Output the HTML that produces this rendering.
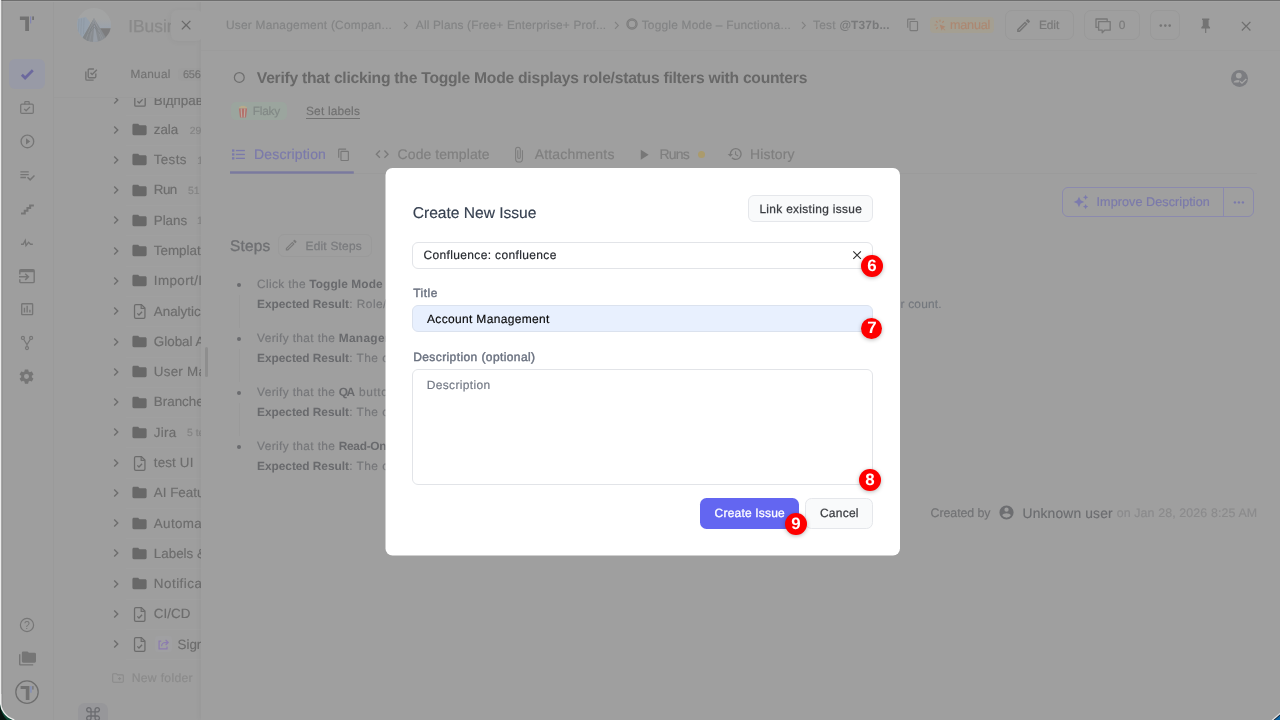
<!DOCTYPE html>
<html lang="en">
<head>
<meta charset="utf-8">
<title>Create New Issue</title>
<style>
*{box-sizing:border-box;margin:0;padding:0}
html,body{width:1280px;height:720px;overflow:hidden;background:#ebebeb;font-family:"Liberation Sans",sans-serif;color:#374151}
#app{position:absolute;left:0;top:0;width:1280px;height:720px;background:#9f9f9f;overflow:hidden}
#side{position:absolute;left:0;top:0;width:54px;height:720px;background:#9e9e9e;border-right:1px solid #9a9a9a}
#tree{position:absolute;left:0;top:0;width:201px;height:720px;overflow:hidden}
#detail{position:absolute;left:0;top:0;width:1280px;height:720px}
#modal{position:absolute;left:0;top:0;width:1280px;height:720px}
svg{position:absolute;overflow:visible}
.t{position:absolute;white-space:nowrap;line-height:1;-webkit-text-stroke:.16px;text-rendering:geometricPrecision}
#tree,#side,#detail,#modal{will-change:transform}
.b{position:absolute}
.badge{position:absolute;width:21.8px;height:21.8px;border-radius:50%;background:#fe0000;box-shadow:0 1px 4px rgba(0,0,0,.28)}
.badge span{text-rendering:geometricPrecision;position:absolute;left:0;right:0;text-align:center;color:#fff;font-weight:700;line-height:1}
</style>
</head>
<body>
<div id="app">
<div id="tree">
<div class="b" style="left:54.00px;top:0.00px;width:147.00px;height:720.00px;background:#9e9e9e;"></div>
<svg style="left:108.15px;top:92.45px;" width="16.10" height="16.10" viewBox="0 0 24 24" fill="#6c6c6c"><path d="M8.59,16.58L13.17,12L8.59,7.41L10,6L16,12L10,18L8.59,16.58Z"/></svg>
<svg style="left:134px;top:94.50px" width="12" height="12" viewBox="0 0 12 12" fill="none" stroke="#6c6c6c" stroke-width="1.3"><rect x="0.8" y="0.8" width="10.4" height="10.4" rx="1"/><path d="M3.4 6.2L5.2 8L8.6 4.4"/></svg>
<div class="t" style="left:153.80px;top:94px;font-size:13.4px;color:#6d6d6d;">Відправка</div>
<div class="b" style="left:126.00px;top:115.40px;width:75.00px;height:0.80px;background:#a0a0a0;"></div>
<svg style="left:108.15px;top:121.55px;" width="16.10" height="16.10" viewBox="0 0 24 24" fill="#6c6c6c"><path d="M8.59,16.58L13.17,12L8.59,7.41L10,6L16,12L10,18L8.59,16.58Z"/></svg>
<svg style="left:131.38px;top:121.08px;" width="17.04" height="17.04" viewBox="0 0 24 24" fill="#686868"><path d="M10,4H4C2.89,4 2,4.89 2,6V18A2,2 0 0,0 4,20H20A2,2 0 0,0 22,18V8C22,6.89 21.1,6 20,6H12L10,4Z"/></svg>
<div class="t" style="left:153.80px;top:123px;font-size:13.4px;color:#6d6d6d;letter-spacing:-0.094px;">zala</div>
<div class="t" style="left:189.70px;top:127px;font-size:10.4px;color:#848484;">29</div>
<div class="b" style="left:126.00px;top:144.50px;width:75.00px;height:0.80px;background:#a0a0a0;"></div>
<svg style="left:108.15px;top:151.85px;" width="16.10" height="16.10" viewBox="0 0 24 24" fill="#6c6c6c"><path d="M8.59,16.58L13.17,12L8.59,7.41L10,6L16,12L10,18L8.59,16.58Z"/></svg>
<svg style="left:131.38px;top:151.38px;" width="17.04" height="17.04" viewBox="0 0 24 24" fill="#686868"><path d="M10,4H4C2.89,4 2,4.89 2,6V18A2,2 0 0,0 4,20H20A2,2 0 0,0 22,18V8C22,6.89 21.1,6 20,6H12L10,4Z"/></svg>
<div class="t" style="left:153.80px;top:153px;font-size:13.4px;color:#6d6d6d;letter-spacing:0.331px;">Tests</div>
<div class="t" style="left:197.20px;top:157px;font-size:10.4px;color:#848484;">12</div>
<div class="b" style="left:126.00px;top:174.80px;width:75.00px;height:0.80px;background:#a0a0a0;"></div>
<svg style="left:108.15px;top:182.15px;" width="16.10" height="16.10" viewBox="0 0 24 24" fill="#6c6c6c"><path d="M8.59,16.58L13.17,12L8.59,7.41L10,6L16,12L10,18L8.59,16.58Z"/></svg>
<svg style="left:131.38px;top:181.68px;" width="17.04" height="17.04" viewBox="0 0 24 24" fill="#686868"><path d="M10,4H4C2.89,4 2,4.89 2,6V18A2,2 0 0,0 4,20H20A2,2 0 0,0 22,18V8C22,6.89 21.1,6 20,6H12L10,4Z"/></svg>
<div class="t" style="left:153.80px;top:183px;font-size:13.4px;color:#6d6d6d;letter-spacing:-0.591px;">Run</div>
<div class="t" style="left:188.00px;top:187px;font-size:10.4px;color:#848484;">51 tests</div>
<div class="b" style="left:126.00px;top:205.10px;width:75.00px;height:0.80px;background:#a0a0a0;"></div>
<svg style="left:108.15px;top:212.45px;" width="16.10" height="16.10" viewBox="0 0 24 24" fill="#6c6c6c"><path d="M8.59,16.58L13.17,12L8.59,7.41L10,6L16,12L10,18L8.59,16.58Z"/></svg>
<svg style="left:131.38px;top:211.98px;" width="17.04" height="17.04" viewBox="0 0 24 24" fill="#686868"><path d="M10,4H4C2.89,4 2,4.89 2,6V18A2,2 0 0,0 4,20H20A2,2 0 0,0 22,18V8C22,6.89 21.1,6 20,6H12L10,4Z"/></svg>
<div class="t" style="left:153.80px;top:214px;font-size:13.4px;color:#6d6d6d;letter-spacing:-0.055px;">Plans</div>
<div class="t" style="left:197.00px;top:217px;font-size:10.4px;color:#848484;">1 test</div>
<div class="b" style="left:126.00px;top:235.40px;width:75.00px;height:0.80px;background:#a0a0a0;"></div>
<svg style="left:108.15px;top:242.65px;" width="16.10" height="16.10" viewBox="0 0 24 24" fill="#6c6c6c"><path d="M8.59,16.58L13.17,12L8.59,7.41L10,6L16,12L10,18L8.59,16.58Z"/></svg>
<svg style="left:131.38px;top:242.18px;" width="17.04" height="17.04" viewBox="0 0 24 24" fill="#686868"><path d="M10,4H4C2.89,4 2,4.89 2,6V18A2,2 0 0,0 4,20H20A2,2 0 0,0 22,18V8C22,6.89 21.1,6 20,6H12L10,4Z"/></svg>
<div class="t" style="left:153.80px;top:244px;font-size:13.4px;color:#6d6d6d;">Templates</div>
<div class="b" style="left:126.00px;top:265.60px;width:75.00px;height:0.80px;background:#a0a0a0;"></div>
<svg style="left:108.15px;top:272.95px;" width="16.10" height="16.10" viewBox="0 0 24 24" fill="#6c6c6c"><path d="M8.59,16.58L13.17,12L8.59,7.41L10,6L16,12L10,18L8.59,16.58Z"/></svg>
<svg style="left:131.38px;top:272.48px;" width="17.04" height="17.04" viewBox="0 0 24 24" fill="#686868"><path d="M10,4H4C2.89,4 2,4.89 2,6V18A2,2 0 0,0 4,20H20A2,2 0 0,0 22,18V8C22,6.89 21.1,6 20,6H12L10,4Z"/></svg>
<div class="t" style="left:153.80px;top:274px;font-size:13.4px;color:#6d6d6d;letter-spacing:0.400px;">Import/Import</div>
<div class="b" style="left:126.00px;top:295.90px;width:75.00px;height:0.80px;background:#a0a0a0;"></div>
<svg style="left:108.15px;top:303.25px;" width="16.10" height="16.10" viewBox="0 0 24 24" fill="#6c6c6c"><path d="M8.59,16.58L13.17,12L8.59,7.41L10,6L16,12L10,18L8.59,16.58Z"/></svg>
<svg style="left:132.08px;top:303.39px" width="15.48" height="16.83" viewBox="0 0 18.4 20"><path d="M4.6 1.8H11.2L15.4 6V16.6Q15.4 18.2 13.8 18.2H4.6Q3 18.2 3 16.6V3.4Q3 1.8 4.6 1.8Z" fill="none" stroke="#6c6c6c" stroke-width="1.5"/><path d="M10.9 2V6.3H15.2" fill="none" stroke="#6c6c6c" stroke-width="1.4"/><path d="M6.3 12.3L8.3 14.3L12 10.4" fill="none" stroke="#6c6c6c" stroke-width="1.5"/></svg>
<div class="t" style="left:153.80px;top:305px;font-size:13.4px;color:#6d6d6d;">Analytics</div>
<div class="b" style="left:126.00px;top:326.20px;width:75.00px;height:0.80px;background:#a0a0a0;"></div>
<svg style="left:108.15px;top:333.55px;" width="16.10" height="16.10" viewBox="0 0 24 24" fill="#6c6c6c"><path d="M8.59,16.58L13.17,12L8.59,7.41L10,6L16,12L10,18L8.59,16.58Z"/></svg>
<svg style="left:131.38px;top:333.08px;" width="17.04" height="17.04" viewBox="0 0 24 24" fill="#686868"><path d="M10,4H4C2.89,4 2,4.89 2,6V18A2,2 0 0,0 4,20H20A2,2 0 0,0 22,18V8C22,6.89 21.1,6 20,6H12L10,4Z"/></svg>
<div class="t" style="left:153.80px;top:335px;font-size:13.4px;color:#6d6d6d;">Global Analytics</div>
<div class="b" style="left:126.00px;top:356.50px;width:75.00px;height:0.80px;background:#a0a0a0;"></div>
<svg style="left:108.15px;top:363.85px;" width="16.10" height="16.10" viewBox="0 0 24 24" fill="#6c6c6c"><path d="M8.59,16.58L13.17,12L8.59,7.41L10,6L16,12L10,18L8.59,16.58Z"/></svg>
<svg style="left:131.38px;top:363.38px;" width="17.04" height="17.04" viewBox="0 0 24 24" fill="#686868"><path d="M10,4H4C2.89,4 2,4.89 2,6V18A2,2 0 0,0 4,20H20A2,2 0 0,0 22,18V8C22,6.89 21.1,6 20,6H12L10,4Z"/></svg>
<div class="t" style="left:153.80px;top:365px;font-size:13.4px;color:#6d6d6d;letter-spacing:0.250px;">User Management</div>
<div class="b" style="left:126.00px;top:386.80px;width:75.00px;height:0.80px;background:#a0a0a0;"></div>
<svg style="left:108.15px;top:394.05px;" width="16.10" height="16.10" viewBox="0 0 24 24" fill="#6c6c6c"><path d="M8.59,16.58L13.17,12L8.59,7.41L10,6L16,12L10,18L8.59,16.58Z"/></svg>
<svg style="left:131.38px;top:393.58px;" width="17.04" height="17.04" viewBox="0 0 24 24" fill="#686868"><path d="M10,4H4C2.89,4 2,4.89 2,6V18A2,2 0 0,0 4,20H20A2,2 0 0,0 22,18V8C22,6.89 21.1,6 20,6H12L10,4Z"/></svg>
<div class="t" style="left:153.80px;top:395px;font-size:13.4px;color:#6d6d6d;">Branches</div>
<div class="b" style="left:126.00px;top:417.00px;width:75.00px;height:0.80px;background:#a0a0a0;"></div>
<svg style="left:108.15px;top:424.35px;" width="16.10" height="16.10" viewBox="0 0 24 24" fill="#6c6c6c"><path d="M8.59,16.58L13.17,12L8.59,7.41L10,6L16,12L10,18L8.59,16.58Z"/></svg>
<svg style="left:131.38px;top:423.88px;" width="17.04" height="17.04" viewBox="0 0 24 24" fill="#686868"><path d="M10,4H4C2.89,4 2,4.89 2,6V18A2,2 0 0,0 4,20H20A2,2 0 0,0 22,18V8C22,6.89 21.1,6 20,6H12L10,4Z"/></svg>
<div class="t" style="left:153.80px;top:426px;font-size:13.4px;color:#6d6d6d;letter-spacing:0.236px;">Jira</div>
<div class="t" style="left:187.00px;top:429px;font-size:10.4px;color:#848484;">5 tests</div>
<div class="b" style="left:126.00px;top:447.30px;width:75.00px;height:0.80px;background:#a0a0a0;"></div>
<svg style="left:108.15px;top:454.65px;" width="16.10" height="16.10" viewBox="0 0 24 24" fill="#6c6c6c"><path d="M8.59,16.58L13.17,12L8.59,7.41L10,6L16,12L10,18L8.59,16.58Z"/></svg>
<svg style="left:132.08px;top:454.79px" width="15.48" height="16.83" viewBox="0 0 18.4 20"><path d="M4.6 1.8H11.2L15.4 6V16.6Q15.4 18.2 13.8 18.2H4.6Q3 18.2 3 16.6V3.4Q3 1.8 4.6 1.8Z" fill="none" stroke="#6c6c6c" stroke-width="1.5"/><path d="M10.9 2V6.3H15.2" fill="none" stroke="#6c6c6c" stroke-width="1.4"/><path d="M6.3 12.3L8.3 14.3L12 10.4" fill="none" stroke="#6c6c6c" stroke-width="1.5"/></svg>
<div class="t" style="left:153.80px;top:456px;font-size:13.4px;color:#6d6d6d;letter-spacing:0.146px;">test UI</div>
<div class="b" style="left:126.00px;top:477.60px;width:75.00px;height:0.80px;background:#a0a0a0;"></div>
<svg style="left:108.15px;top:484.95px;" width="16.10" height="16.10" viewBox="0 0 24 24" fill="#6c6c6c"><path d="M8.59,16.58L13.17,12L8.59,7.41L10,6L16,12L10,18L8.59,16.58Z"/></svg>
<svg style="left:131.38px;top:484.48px;" width="17.04" height="17.04" viewBox="0 0 24 24" fill="#686868"><path d="M10,4H4C2.89,4 2,4.89 2,6V18A2,2 0 0,0 4,20H20A2,2 0 0,0 22,18V8C22,6.89 21.1,6 20,6H12L10,4Z"/></svg>
<div class="t" style="left:153.80px;top:486px;font-size:13.4px;color:#6d6d6d;">AI Features</div>
<div class="b" style="left:126.00px;top:507.90px;width:75.00px;height:0.80px;background:#a0a0a0;"></div>
<svg style="left:108.15px;top:515.25px;" width="16.10" height="16.10" viewBox="0 0 24 24" fill="#6c6c6c"><path d="M8.59,16.58L13.17,12L8.59,7.41L10,6L16,12L10,18L8.59,16.58Z"/></svg>
<svg style="left:131.38px;top:514.78px;" width="17.04" height="17.04" viewBox="0 0 24 24" fill="#686868"><path d="M10,4H4C2.89,4 2,4.89 2,6V18A2,2 0 0,0 4,20H20A2,2 0 0,0 22,18V8C22,6.89 21.1,6 20,6H12L10,4Z"/></svg>
<div class="t" style="left:153.80px;top:517px;font-size:13.4px;color:#6d6d6d;letter-spacing:0.350px;">Automation</div>
<div class="b" style="left:126.00px;top:538.20px;width:75.00px;height:0.80px;background:#a0a0a0;"></div>
<svg style="left:108.15px;top:545.45px;" width="16.10" height="16.10" viewBox="0 0 24 24" fill="#6c6c6c"><path d="M8.59,16.58L13.17,12L8.59,7.41L10,6L16,12L10,18L8.59,16.58Z"/></svg>
<svg style="left:131.38px;top:544.98px;" width="17.04" height="17.04" viewBox="0 0 24 24" fill="#686868"><path d="M10,4H4C2.89,4 2,4.89 2,6V18A2,2 0 0,0 4,20H20A2,2 0 0,0 22,18V8C22,6.89 21.1,6 20,6H12L10,4Z"/></svg>
<div class="t" style="left:153.80px;top:547px;font-size:13.4px;color:#6d6d6d;">Labels &amp; Fields</div>
<div class="b" style="left:126.00px;top:568.40px;width:75.00px;height:0.80px;background:#a0a0a0;"></div>
<svg style="left:108.15px;top:575.75px;" width="16.10" height="16.10" viewBox="0 0 24 24" fill="#6c6c6c"><path d="M8.59,16.58L13.17,12L8.59,7.41L10,6L16,12L10,18L8.59,16.58Z"/></svg>
<svg style="left:131.38px;top:575.28px;" width="17.04" height="17.04" viewBox="0 0 24 24" fill="#686868"><path d="M10,4H4C2.89,4 2,4.89 2,6V18A2,2 0 0,0 4,20H20A2,2 0 0,0 22,18V8C22,6.89 21.1,6 20,6H12L10,4Z"/></svg>
<div class="t" style="left:153.80px;top:577px;font-size:13.4px;color:#6d6d6d;letter-spacing:0.500px;">Notifications</div>
<div class="b" style="left:126.00px;top:598.70px;width:75.00px;height:0.80px;background:#a0a0a0;"></div>
<svg style="left:108.15px;top:606.05px;" width="16.10" height="16.10" viewBox="0 0 24 24" fill="#6c6c6c"><path d="M8.59,16.58L13.17,12L8.59,7.41L10,6L16,12L10,18L8.59,16.58Z"/></svg>
<svg style="left:132.08px;top:606.19px" width="15.48" height="16.83" viewBox="0 0 18.4 20"><path d="M4.6 1.8H11.2L15.4 6V16.6Q15.4 18.2 13.8 18.2H4.6Q3 18.2 3 16.6V3.4Q3 1.8 4.6 1.8Z" fill="none" stroke="#6c6c6c" stroke-width="1.5"/><path d="M10.9 2V6.3H15.2" fill="none" stroke="#6c6c6c" stroke-width="1.4"/><path d="M6.3 12.3L8.3 14.3L12 10.4" fill="none" stroke="#6c6c6c" stroke-width="1.5"/></svg>
<div class="t" style="left:153.80px;top:607px;font-size:13.4px;color:#6d6d6d;letter-spacing:0.031px;">CI/CD</div>
<div class="b" style="left:126.00px;top:629.00px;width:75.00px;height:0.80px;background:#a0a0a0;"></div>
<svg style="left:108.15px;top:636.35px;" width="16.10" height="16.10" viewBox="0 0 24 24" fill="#6c6c6c"><path d="M8.59,16.58L13.17,12L8.59,7.41L10,6L16,12L10,18L8.59,16.58Z"/></svg>
<svg style="left:132.08px;top:636.49px" width="15.48" height="16.83" viewBox="0 0 18.4 20"><path d="M4.6 1.8H11.2L15.4 6V16.6Q15.4 18.2 13.8 18.2H4.6Q3 18.2 3 16.6V3.4Q3 1.8 4.6 1.8Z" fill="none" stroke="#6c6c6c" stroke-width="1.5"/><path d="M10.9 2V6.3H15.2" fill="none" stroke="#6c6c6c" stroke-width="1.4"/><path d="M6.3 12.3L8.3 14.3L12 10.4" fill="none" stroke="#6c6c6c" stroke-width="1.5"/></svg>
<div class="b" style="left:155.00px;top:636.40px;width:16.60px;height:16.00px;background:#a0a0a2;border-radius:3.0px;"></div>
<svg style="left:158px;top:638.80px" width="11" height="11" viewBox="0 0 11 11" fill="none" stroke="#8c7cb0" stroke-width="1.25"><path d="M3.2 2H1.1V9.9H9V7.6"/><path d="M3.6 7.2Q3.8 3.6 7.4 3.5H10M7.6 0.9L10.2 3.5L7.6 6.1"/></svg>
<div class="t" style="left:177.50px;top:638px;font-size:13.4px;color:#6d6d6d;">Sign In</div>
<div class="b" style="left:126.00px;top:659.30px;width:75.00px;height:0.80px;background:#a0a0a0;"></div>
<svg style="left:112px;top:672.8px" width="12" height="10" viewBox="0 0 12 10" fill="none" stroke="#8b8b8b" stroke-width="1.1"><path d="M0.7 1.6Q0.7 0.7 1.6 0.7H4.4L5.6 1.9H10.4Q11.3 1.9 11.3 2.8V8.3Q11.3 9.2 10.4 9.2H1.6Q0.7 9.2 0.7 8.3Z"/><path d="M7.6 4V7.2M6 5.6H9.2"/></svg>
<div class="t" style="left:131.70px;top:672px;font-size:12.2px;color:#8b8b8b;letter-spacing:0.298px;">New folder</div>
<div class="b" style="left:54.00px;top:0.00px;width:147.00px;height:97.50px;background:#9e9e9e;border-bottom:1px solid #9b9b9b;"></div>
<svg style="left:77.3px;top:8px" width="34" height="34" viewBox="0 0 34 34"><defs><clipPath id="av"><circle cx="17" cy="17" r="17"/></clipPath><linearGradient id="sky" x1="0" y1="0" x2="0" y2="1"><stop offset="0" stop-color="#a3a4a4"/><stop offset="1" stop-color="#9aa2ac"/></linearGradient></defs><g clip-path="url(#av)"><rect width="34" height="34" fill="#a3a4a4"/><rect x="20" y="11" width="14" height="9.5" fill="url(#sky)"/><path d="M23 20.3H34V31H28Z" fill="#7c7c7d"/><path d="M0 10.8L8.8 9L13.2 14.5L6 34H0Z" fill="#96a1ad"/><path d="M2 11L1 30M4.5 10.5L3.5 32M7 10L6.5 26" stroke="#8d97a1" stroke-width=".7"/><path d="M17 10.3L33 36H2Z" fill="#888c90"/><path d="M17 10.3L2 36H10Z" fill="#828689"/><path d="M17.3 15L21 34H16Z" fill="#979da5"/><path d="M17 10.3L8 34M17 10.3L25 34M17 12L12.5 34M17.2 12L27.5 34" stroke="#979b9f" stroke-width=".6" fill="none"/><path d="M13 22L17.3 16L21.3 22M11.5 26L17.3 19L23 26" stroke="#7d8185" stroke-width=".7" fill="none"/></g></svg>
<div class="t" style="left:128.20px;top:18px;font-size:17.4px;color:#8a8a8a;-webkit-text-stroke:.25px #8a8a8a;">IBusiness</div>
<svg style="left:84.8px;top:67.7px" width="13" height="13" viewBox="0 0 12.5 12.5" fill="none" stroke="#737373" stroke-width="1.3"><path d="M10.4 5.4V8.2Q10.4 9.4 9.2 9.4H4.3Q3.1 9.4 3.1 8.2V2.2Q3.1 1 4.3 1H8.6"/><path d="M5.3 4.6L6.9 6.3L11.4 1.6"/><path d="M0.8 3.4V10.5Q0.8 11.7 2 11.7H8.3"/></svg>
<div class="t" style="left:130.40px;top:69px;font-size:11.8px;color:#737373;letter-spacing:0.260px;">Manual</div>
<div class="b" style="left:178.40px;top:67.80px;width:33.60px;height:13.00px;background:#9c9c9c;border-radius:4.0px;"></div>
<div class="t" style="left:182.90px;top:70px;font-size:11.0px;color:#757575;letter-spacing:-0.227px;">656</div>
<div class="b" style="left:78.10px;top:702.80px;width:29.70px;height:27.20px;background:#97979a;border-radius:6.5px;"></div>
<div class="t" style="left:83.7px;top:706.6px;font-size:18.6px;color:#6c6d71;font-family:'DejaVu Sans',sans-serif;-webkit-text-stroke:0">⌘</div>
</div>
<div id="side">
<svg style="left:0;top:0" width="54" height="50" viewBox="0 0 54 50"><path d="M19.9 16.4H29V31H25.2V19.9H19.9Z" fill="#727272"/><rect x="30.1" y="16.4" width="1.1" height="7" fill="#7f82b4"/><rect x="32.2" y="16.4" width="1.8" height="3.6" fill="#727272"/></svg>
<div class="b" style="left:8.80px;top:58.80px;width:36.30px;height:30.50px;background:#989aa6;border-radius:6.0px;"></div>
<svg style="left:18.97px;top:66.14px;" width="16.33" height="16.33" viewBox="0 0 24 24" fill="#6c699e"><path d="M9,20.42L2.79,14.21L5.62,11.38L9,14.77L18.88,4.88L21.71,7.71L9,20.42Z"/></svg>
<svg style="left:19px;top:100px" width="16" height="16" viewBox="0 0 16 16" fill="none" stroke="#767676" stroke-width="1.25"><rect x="1.7" y="4.2" width="12.6" height="9.2" rx="1.2"/><path d="M5.8 4.2V2.4Q5.8 1.7 6.5 1.7H9.5Q10.2 1.7 10.2 2.4V4.2"/><path d="M5.2 8.9L7.1 10.8L11 6.9" stroke-width="1.3"/></svg>
<svg style="left:18.60px;top:133.10px;" width="16.80" height="16.80" viewBox="0 0 24 24" fill="#767676"><path d="M12,20C7.59,20 4,16.41 4,12C4,7.59 7.59,4 12,4C16.41,4 20,7.59 20,12C20,16.41 16.41,20 12,20M12,2A10,10 0 0,0 2,12A10,10 0 0,0 12,22A10,10 0 0,0 22,12A10,10 0 0,0 12,2M10,16.5L16,12L10,7.5V16.5Z"/></svg>
<svg style="left:18.56px;top:166.56px;" width="16.69" height="16.69" viewBox="0 0 24 24" fill="#767676"><path d="M14,10H2V12H14V10M14,6H2V8H14V6M2,16H10V14H2V16M21.5,11.5L23,13L16,20L11.5,15.5L13,14L16,17L21.5,11.5Z"/></svg>
<svg style="left:19.06px;top:200.56px;" width="16.21" height="16.21" viewBox="0 0 24 24" fill="#767676"><path d="M15,5V9H11V13H7V17H3V20H10V16H14V12H18V8H22V5H15Z"/></svg>
<svg style="left:19.34px;top:234.60px;" width="15.82" height="15.82" viewBox="0 0 24 24" fill="#767676"><path d="M3,13H5.79L10.1,4.79L11.28,13.75L14.5,9.66L17.83,13H21V15H17L14.67,12.67L9.92,18.73L8.94,11.31L7,15H3V13Z"/></svg>
<svg style="left:19px;top:268.7px" width="16" height="14.4" viewBox="0 0 16 14.4" fill="none" stroke="#767676" stroke-width="1.4"><path d="M0.8 5.4V2Q0.8 0.8 2 0.8H14Q15.2 0.8 15.2 2V12.4Q15.2 13.6 14 13.6H2Q0.8 13.6 0.8 12.4V10.2"/><path d="M0.8 2H15.2" stroke-width="2.4"/><path d="M0 7.8H9M6.2 4.7L9.4 7.8L6.2 10.9" stroke-width="1.5"/></svg>
<svg style="left:18.83px;top:301.08px;" width="16.33" height="16.33" viewBox="0 0 24 24" fill="#767676"><path d="M9,17H7V10H9V17M13,17H11V7H13V17M17,17H15V13H17V17M19,19H5V5H19V19.1M19,3H5C3.9,3 3,3.9 3,5V19C3,20.1 3.9,21 5,21H19C20.1,21 21,20.1 21,19V5C21,3.9 20.1,3 19,3Z"/></svg>
<svg style="left:19px;top:335px" width="16" height="16" viewBox="0 0 16 16" fill="none" stroke="#767676" stroke-width="1.2"><circle cx="3.9" cy="2.9" r="1.5"/><circle cx="12.1" cy="2.9" r="1.5"/><circle cx="8" cy="13.1" r="1.5"/><path d="M4.6 4.2L8 9.6L11.4 4.2M8 9.6V11.6"/></svg>
<svg style="left:18.47px;top:368.47px;" width="17.06" height="17.06" viewBox="0 0 24 24" fill="#767676"><path d="M12,15.5A3.5,3.5 0 0,1 8.5,12A3.5,3.5 0 0,1 12,8.5A3.5,3.5 0 0,1 15.5,12A3.5,3.5 0 0,1 12,15.5M19.43,12.97C19.47,12.65 19.5,12.33 19.5,12C19.5,11.67 19.47,11.34 19.43,11L21.54,9.37C21.73,9.22 21.78,8.95 21.66,8.73L19.66,5.27C19.54,5.05 19.27,4.96 19.05,5.05L16.56,6.05C16.04,5.66 15.5,5.32 14.87,5.07L14.5,2.42C14.46,2.18 14.25,2 14,2H10C9.75,2 9.54,2.18 9.5,2.42L9.13,5.07C8.5,5.32 7.96,5.66 7.44,6.05L4.95,5.05C4.73,4.96 4.46,5.05 4.34,5.27L2.34,8.73C2.21,8.95 2.27,9.22 2.46,9.37L4.57,11C4.53,11.34 4.5,11.67 4.5,12C4.5,12.33 4.53,12.65 4.57,12.97L2.46,14.63C2.27,14.78 2.21,15.05 2.34,15.27L4.34,18.73C4.46,18.95 4.73,19.03 4.95,18.95L7.44,17.94C7.96,18.34 8.5,18.68 9.13,18.93L9.5,21.58C9.54,21.82 9.75,22 10,22H14C14.25,22 14.46,21.82 14.5,21.58L14.87,18.93C15.5,18.67 16.04,18.34 16.56,17.94L19.05,18.95C19.27,19.03 19.54,18.95 19.66,18.73L21.66,15.27C21.78,15.05 21.73,14.78 21.54,14.63L19.43,12.97Z"/></svg>
<svg style="left:19px;top:617px" width="16" height="16" viewBox="0 0 16 16"><circle cx="8" cy="8" r="6.6" fill="none" stroke="#767676" stroke-width="1.2"/><text x="8" y="11.6" text-anchor="middle" font-family="Liberation Sans, sans-serif" font-size="10.5" fill="#767676">?</text></svg>
<svg style="left:18.75px;top:650.25px;" width="17.01" height="17.01" viewBox="0 0 24 24" fill="#767676"><path d="M22,4H14L12,2H6A2,2 0 0,0 4,4V16A2,2 0 0,0 6,18H22A2,2 0 0,0 24,16V6A2,2 0 0,0 22,4M2,6H0V11H0V20A2,2 0 0,0 2,22H20V20H2V6Z"/></svg>
<svg style="left:14px;top:679px" width="26" height="26" viewBox="0 0 26 26"><circle cx="13" cy="13.1" r="11.2" fill="none" stroke="#6f6f6f" stroke-width="1.3"/><path d="M6.6 7.1H15.4V21H11.8V9.9H6.6Z" fill="#727272"/><rect x="16.1" y="7.1" width="1.6" height="6.6" fill="#8590b5"/><rect x="18.2" y="7.1" width="1.4" height="3.5" fill="#777"/></svg>
</div>
<div id="detail">
<div class="b" style="left:201.40px;top:0.00px;width:1078.60px;height:720.00px;background:#9f9f9f;box-shadow:-2px 0 5px rgba(0,0,0,.035);"></div>
<div class="b" style="left:170.80px;top:10.00px;width:32.20px;height:30.80px;background:#9f9f9f;border-radius:6.5px;box-shadow:-1px 1px 6px rgba(0,0,0,.04);"></div>
<div class="b" style="left:201.40px;top:3.00px;width:28.60px;height:45.00px;background:#9f9f9f;"></div>
<svg style="left:178.35px;top:17.38px;" width="16.24" height="16.24" viewBox="0 0 24 24" fill="#6b6b6b"><path d="M19,6.41L17.59,5L12,10.59L6.41,5L5,6.41L10.59,12L5,17.59L6.41,19L12,13.41L17.59,19L19,17.59L13.41,12L19,6.41Z"/></svg>
<div class="b" style="left:205.00px;top:347.00px;width:3.00px;height:29.50px;background:#8e8e8e;border-radius:1.5px;"></div>
<div class="b" style="left:201.00px;top:50.00px;width:1079.00px;height:1.00px;background:#9c9c9c;"></div>
<div class="t" style="left:225.90px;top:20px;font-size:11.9px;color:#838485;letter-spacing:0.242px;">User Management (Compan...</div>
<svg style="left:403.40px;top:20.80px" width="6" height="9" viewBox="0 0 6 9" fill="none" stroke="#828282" stroke-width="1.15"><path d="M1 1L4.3 4.4L1 7.8"/></svg>
<div class="t" style="left:415.80px;top:20px;font-size:11.9px;color:#838485;letter-spacing:0.171px;">All Plans (Free+ Enterprise+ Prof...</div>
<svg style="left:613.60px;top:20.80px" width="6" height="9" viewBox="0 0 6 9" fill="none" stroke="#828282" stroke-width="1.15"><path d="M1 1L4.3 4.4L1 7.8"/></svg>
<svg style="left:625.6px;top:18.3px" width="12" height="12" viewBox="0 0 12 12"><circle cx="6" cy="6" r="4.5" fill="none" stroke="#7d7d7d" stroke-width="2.4"/><circle cx="6" cy="6" r="4.4" fill="none" stroke="#8a8a8a" stroke-width=".9"/></svg>
<div class="t" style="left:641.70px;top:20px;font-size:11.9px;color:#838485;letter-spacing:0.226px;">Toggle Mode – Functiona...</div>
<svg style="left:800.60px;top:20.80px" width="6" height="9" viewBox="0 0 6 9" fill="none" stroke="#828282" stroke-width="1.15"><path d="M1 1L4.3 4.4L1 7.8"/></svg>
<div class="t" style="left:813.00px;top:20px;font-size:11.9px;color:#838485;letter-spacing:0.259px;">Test</div>
<div class="t" style="left:839.40px;top:20px;font-size:11.9px;color:#797a7b;font-weight:700;-webkit-text-stroke:0;letter-spacing:0.129px;">@T37b...</div>
<svg style="left:906.08px;top:18.39px;" width="13.82" height="13.82" viewBox="0 0 24 24" fill="#7a7a7a"><path d="M19,21H8V7H19M19,5H8A2,2 0 0,0 6,7V21A2,2 0 0,0 8,23H19A2,2 0 0,0 21,21V7A2,2 0 0,0 19,5M16,1H4A2,2 0 0,0 2,3V17H4V3H16V1Z"/></svg>
<div class="b" style="left:930.00px;top:17.30px;width:63.90px;height:15.80px;background:#a49f92;border-radius:4.0px;"></div>
<svg style="left:933.6px;top:18.8px" width="12.6" height="12.6" viewBox="0 0 12.6 12.6" fill="none" stroke="#ad8872" stroke-width="1.2" stroke-linecap="round"><path d="M6 1V2.3M2.4 2.5L3.3 3.4M1 6H2.3M2.5 9.5L3.4 8.6M9.5 2.5L8.6 3.4"/><path d="M5.6 5.6L11.6 7.8L9.2 8.9L11.3 11L10.8 11.5L8.7 9.4L7.7 11.7Z" fill="#ad8872" stroke="none"/></svg>
<div class="t" style="left:950.00px;top:19px;font-size:12.6px;color:#ad8872;letter-spacing:-0.205px;">manual</div>
<div class="b" style="left:1004.50px;top:10.10px;width:69.20px;height:30.10px;border-radius:7.0px;border:1px solid #999;"></div>
<svg style="left:1014.88px;top:16.73px;" width="17.13" height="17.13" viewBox="0 0 24 24" fill="#767676"><path d="M14.06,9L15,9.94L5.92,19H5V18.08L14.06,9M17.66,3C17.41,3 17.15,3.1 16.96,3.29L15.13,5.12L18.88,8.87L20.71,7.04C21.1,6.65 21.1,6 20.71,5.63L18.37,3.29C18.17,3.09 17.92,3 17.66,3M14.06,6.19L3,17.25V21H6.75L17.81,9.94L14.06,6.19Z"/></svg>
<div class="t" style="left:1038.90px;top:20px;font-size:11.9px;color:#7a7a7a;letter-spacing:-0.035px;-webkit-text-stroke:.2px #7a7a7a;">Edit</div>
<div class="b" style="left:1084.20px;top:10.10px;width:55.40px;height:30.10px;border-radius:7.0px;border:1px solid #999;"></div>
<svg style="left:1095px;top:17.6px" width="16" height="16" viewBox="0 0 16 16" fill="none" stroke="#787878" stroke-width="1.3" stroke-linejoin="round"><path d="M2.9 9.4H1V1H12.2V2.9"/><path d="M3.6 3.6H15.2V12.2H9.6L7.2 14.8V12.2H3.6Z"/></svg>
<div class="t" style="left:1118.80px;top:20px;font-size:11.9px;color:#7a7a7a;">0</div>
<div class="b" style="left:1150.20px;top:10.10px;width:29.80px;height:30.10px;border-radius:7.0px;border:1px solid #999;"></div>
<svg style="left:1158px;top:23px" width="15" height="5" viewBox="0 0 15 5" fill="#767676"><circle cx="2.8" cy="2.6" r="1.3"/><circle cx="7.3" cy="2.6" r="1.3"/><circle cx="11.7" cy="2.6" r="1.3"/></svg>
<svg style="left:1196.91px;top:16.96px;" width="17.38" height="17.38" viewBox="0 0 24 24" fill="#747474"><path d="M16,12V4H17V2H7V4H8V12L6,14V16H11.2V22H12.8V16H18V14L16,12Z"/></svg>
<svg style="left:1237.81px;top:17.51px;" width="16.29" height="16.29" viewBox="0 0 24 24" fill="#707070"><path d="M19,6.41L17.59,5L12,10.59L6.41,5L5,6.41L10.59,12L5,17.59L6.41,19L12,13.41L17.59,19L19,17.59L13.41,12L19,6.41Z"/></svg>
<svg style="left:232.5px;top:71px" width="13" height="13" viewBox="0 0 13 13"><circle cx="6.3" cy="6.4" r="4.9" fill="none" stroke="#6f6f6f" stroke-width="1.25"/></svg>
<div class="t" style="left:256.80px;top:71px;font-size:15.7px;color:#686868;font-weight:700;-webkit-text-stroke:0;letter-spacing:-0.258px;">Verify that clicking the Toggle Mode displays role/status filters with counters</div>
<svg style="left:1231.2px;top:69.7px" width="17" height="17" viewBox="0 0 17 17"><circle cx="8.5" cy="8.5" r="8.5" fill="#7c7d81"/><circle cx="7.8" cy="5.6" r="2.9" fill="#a3a3a3"/><path d="M2.6 12.6Q2.8 9.9 7.2 9.9Q8.4 9.9 8.6 10.4L7.6 12.6Z" fill="#a3a3a3"/><path d="M8.9 11.2L11 13.2L15.3 9" fill="none" stroke="#a6a6a6" stroke-width="1.3"/></svg>
<div class="b" style="left:230.50px;top:102.30px;width:56.30px;height:17.60px;background:#9ba59e;border-radius:5.0px;"></div>
<svg style="left:238.3px;top:104.5px" width="10" height="13" viewBox="0 0 10 13"><path d="M1 3.6Q0.6 1.5 2.6 1.6Q3.4 0.2 5 1Q6.6 0.2 7.4 1.6Q9.4 1.5 9 3.6Z" fill="#b8ab8a"/><path d="M0.9 3.6H9.1L8 12.4H2Z" fill="#b3716b"/><path d="M3.2 3.6L3.7 12.4M6.8 3.6L6.3 12.4" stroke="#b9aca4" stroke-width="1.1"/></svg>
<div class="t" style="left:252.80px;top:106px;font-size:11.9px;color:#828986;letter-spacing:-0.258px;">Flaky</div>
<div class="t" style="left:306.00px;top:106px;font-size:11.9px;color:#707070;letter-spacing:0.182px;">Set labels</div>
<div class="b" style="left:306.00px;top:117.70px;width:53.90px;height:1.00px;background:#727272;"></div>
<div class="b" style="left:230.00px;top:172.60px;width:1027.00px;height:0.80px;background:#9b9b9b;"></div>
<svg style="left:231.7px;top:148.8px" width="13" height="11" viewBox="0 0 13 11" fill="#7b7aab"><rect x="0" y="0.4" width="2.4" height="2.3"/><rect x="0" y="4.3" width="2.4" height="2.3"/><rect x="0" y="8.2" width="2.4" height="2.3"/><rect x="3.9" y="0.9" width="9" height="1.3"/><rect x="3.9" y="4.8" width="9" height="1.3"/><rect x="3.9" y="8.7" width="9" height="1.3"/></svg>
<div class="t" style="left:254.00px;top:147px;font-size:14.0px;color:#7b7aab;letter-spacing:0.187px;">Description</div>
<svg style="left:336.52px;top:147.54px;" width="13.63" height="13.63" viewBox="0 0 24 24" fill="#787878"><path d="M19,21H8V7H19M19,5H8A2,2 0 0,0 6,7V21A2,2 0 0,0 8,23H19A2,2 0 0,0 21,21V7A2,2 0 0,0 19,5M16,1H4A2,2 0 0,0 2,3V17H4V3H16V1Z"/></svg>
<svg style="left:229.8px;top:170px" width="124" height="5" viewBox="0 0 124 5"><rect x="0" y="1.3" width="123.8" height="2.4" fill="#7a799f"/></svg>
<svg style="left:373.72px;top:146.32px;" width="16.36" height="16.36" viewBox="0 0 24 24" fill="#7a7a7a"><path d="M14.6,16.6L19.2,12L14.6,7.4L16,6L22,12L16,18L14.6,16.6M9.4,16.6L4.8,12L9.4,7.4L8,6L2,12L8,18L9.4,16.6Z"/></svg>
<div class="t" style="left:397.60px;top:147px;font-size:14.0px;color:#7f7f7f;letter-spacing:0.070px;">Code template</div>
<svg style="left:509.92px;top:145.93px;" width="17.35" height="17.35" viewBox="0 0 24 24" fill="#7d7d7d"><path d="M16.5,6V17.5A4,4 0 0,1 12.5,21.5A4,4 0 0,1 8.5,17.5V5A2.5,2.5 0 0,1 11,2.5A2.5,2.5 0 0,1 13.5,5V15.5A1,1 0 0,1 12.5,16.5A1,1 0 0,1 11.5,15.5V6H10V15.5A2.5,2.5 0 0,0 12.5,18A2.5,2.5 0 0,0 15,15.5V5A4,4 0 0,0 11,1A4,4 0 0,0 7,5V17.5A5.5,5.5 0 0,0 12.5,23A5.5,5.5 0 0,0 18,17.5V6H16.5Z"/></svg>
<div class="t" style="left:534.70px;top:147px;font-size:14.0px;color:#7f7f7f;letter-spacing:0.189px;">Attachments</div>
<svg style="left:634.99px;top:145.62px;" width="17.26" height="17.26" viewBox="0 0 24 24" fill="#777"><path d="M8,5.14V19.14L19,12.14L8,5.14Z"/></svg>
<div class="t" style="left:659.40px;top:147px;font-size:14.0px;color:#7f7f7f;letter-spacing:-0.761px;">Runs</div>
<div class="b" style="left:698.20px;top:151.40px;width:6.60px;height:6.60px;background:#ab9b6c;border-radius:4.0px;"></div>
<svg style="left:726.62px;top:146.49px;" width="16.12" height="16.12" viewBox="0 0 24 24" fill="#7a7a7a"><path d="M13.5,8H12V13L16.28,15.54L17,14.33L13.5,12.25V8M13,3A9,9 0 0,0 4,12H1L4.96,16.03L9,12H6A7,7 0 0,1 13,5A7,7 0 0,1 20,12A7,7 0 0,1 13,19C11.07,19 9.32,18.21 8.06,16.94L6.64,18.36C8.27,20 10.5,21 13,21A9,9 0 0,0 22,12A9,9 0 0,0 13,3"/></svg>
<div class="t" style="left:750.00px;top:147px;font-size:14.0px;color:#7f7f7f;letter-spacing:0.174px;">History</div>
<div class="b" style="left:1062.00px;top:187.00px;width:192.40px;height:30.00px;border-radius:6.0px;border:1px solid #8b8aae;"></div>
<div class="b" style="left:1222.60px;top:187.50px;width:1.00px;height:29.00px;background:#8b8aae;"></div>
<svg style="left:1072.94px;top:193.94px;" width="15.93" height="15.93" viewBox="0 0 24 24" fill="#7c7bad"><path d="M19,1L17.74,3.75L15,5L17.74,6.26L19,9L20.25,6.26L23,5L20.25,3.75M9,4L6.5,9.5L1,12L6.5,14.5L9,20L11.5,14.5L17,12L11.5,9.5M19,15L17.74,17.74L15,19L17.74,20.25L19,23L20.25,20.25L23,19L20.25,17.74"/></svg>
<div class="t" style="left:1096.50px;top:196px;font-size:12.6px;color:#7b7aab;letter-spacing:0.070px;-webkit-text-stroke:.2px;">Improve Description</div>
<svg style="left:1232.5px;top:199.5px" width="13" height="5" viewBox="0 0 13 5" fill="#7a79ab"><circle cx="1.9" cy="2.4" r="1.2"/><circle cx="5.9" cy="2.4" r="1.2"/><circle cx="9.9" cy="2.4" r="1.2"/></svg>
<div class="t" style="left:230.10px;top:239px;font-size:15.4px;color:#6f7073;letter-spacing:0.205px;-webkit-text-stroke:.35px;">Steps</div>
<div class="b" style="left:278.20px;top:234.00px;width:93.90px;height:23.40px;border-radius:6.0px;border:1px solid #9a9a9a;"></div>
<svg style="left:284.48px;top:238.23px;" width="14.33" height="14.33" viewBox="0 0 24 24" fill="#7a7a7a"><path d="M14.06,9L15,9.94L5.92,19H5V18.08L14.06,9M17.66,3C17.41,3 17.15,3.1 16.96,3.29L15.13,5.12L18.88,8.87L20.71,7.04C21.1,6.65 21.1,6 20.71,5.63L18.37,3.29C18.17,3.09 17.92,3 17.66,3M14.06,6.19L3,17.25V21H6.75L17.81,9.94L14.06,6.19Z"/></svg>
<div class="t" style="left:305.50px;top:241px;font-size:11.9px;color:#7a7b7e;letter-spacing:0.218px;-webkit-text-stroke:.25px;">Edit Steps</div>
<div class="b" style="left:237.30px;top:283.00px;width:4.00px;height:4.00px;background:#6b6c6f;border-radius:2.0px;"></div>
<div class="b" style="left:238.80px;top:294.80px;width:1.00px;height:33.50px;background:#9a9a9a;"></div>
<div class="t" style="left:257.10px;top:279px;font-size:11.9px;color:#76777a;letter-spacing:0.359px;">Click the</div>
<div class="t" style="left:309.30px;top:279px;font-size:11.9px;color:#696a6d;font-weight:700;-webkit-text-stroke:0;letter-spacing:0.091px;">Toggle Mode</div>
<div class="t" style="left:257.10px;top:299px;font-size:11.9px;color:#696a6d;font-weight:700;-webkit-text-stroke:0;letter-spacing:-0.049px;">Expected Result</div>
<div class="t" style="left:349.30px;top:299px;font-size:11.9px;color:#76777a;letter-spacing:0.450px;">: Role/status</div>
<div class="b" style="left:237.30px;top:336.90px;width:4.00px;height:4.00px;background:#6b6c6f;border-radius:2.0px;"></div>
<div class="b" style="left:238.80px;top:348.70px;width:1.00px;height:33.50px;background:#9a9a9a;"></div>
<div class="t" style="left:257.10px;top:333px;font-size:11.9px;color:#76777a;letter-spacing:0.367px;">Verify that the</div>
<div class="t" style="left:338.70px;top:333px;font-size:11.9px;color:#696a6d;font-weight:700;-webkit-text-stroke:0;letter-spacing:0.311px;">Manager</div>
<div class="t" style="left:257.10px;top:353px;font-size:11.9px;color:#696a6d;font-weight:700;-webkit-text-stroke:0;letter-spacing:-0.049px;">Expected Result</div>
<div class="t" style="left:349.30px;top:353px;font-size:11.9px;color:#76777a;letter-spacing:0.450px;">: The counter</div>
<div class="b" style="left:237.30px;top:390.80px;width:4.00px;height:4.00px;background:#6b6c6f;border-radius:2.0px;"></div>
<div class="b" style="left:238.80px;top:402.60px;width:1.00px;height:33.50px;background:#9a9a9a;"></div>
<div class="t" style="left:257.10px;top:387px;font-size:11.9px;color:#76777a;letter-spacing:0.367px;">Verify that the</div>
<div class="t" style="left:338.70px;top:387px;font-size:11.9px;color:#696a6d;font-weight:700;-webkit-text-stroke:0;letter-spacing:-1.350px;">QA</div>
<div class="t" style="left:359.00px;top:387px;font-size:11.9px;color:#76777a;letter-spacing:0.583px;">button</div>
<div class="t" style="left:257.10px;top:407px;font-size:11.9px;color:#696a6d;font-weight:700;-webkit-text-stroke:0;letter-spacing:-0.049px;">Expected Result</div>
<div class="t" style="left:349.30px;top:407px;font-size:11.9px;color:#76777a;letter-spacing:0.450px;">: The counter</div>
<div class="b" style="left:237.30px;top:444.70px;width:4.00px;height:4.00px;background:#6b6c6f;border-radius:2.0px;"></div>
<div class="t" style="left:257.10px;top:441px;font-size:11.9px;color:#76777a;letter-spacing:0.367px;">Verify that the</div>
<div class="t" style="left:338.70px;top:441px;font-size:11.9px;color:#696a6d;font-weight:700;-webkit-text-stroke:0;letter-spacing:-0.276px;">Read-Only</div>
<div class="t" style="left:257.10px;top:461px;font-size:11.9px;color:#696a6d;font-weight:700;-webkit-text-stroke:0;letter-spacing:-0.049px;">Expected Result</div>
<div class="t" style="left:349.30px;top:461px;font-size:11.9px;color:#76777a;letter-spacing:0.450px;">: The counter</div>
<div class="t" style="left:0.00px;top:299px;font-size:11.9px;color:#74787e;left:auto;right:338.20px;letter-spacing:.2px;">user count.</div>
<div class="t" style="left:930.60px;top:507px;font-size:12.4px;color:#727375;letter-spacing:-0.073px;">Created by</div>
<svg style="left:997.98px;top:504.38px;" width="17.04" height="17.04" viewBox="0 0 24 24" fill="#6d6e71"><path d="M12,19.2C9.5,19.2 7.29,17.92 6,16C6.03,14 10,12.9 12,12.9C14,12.9 17.97,14 18,16C16.71,17.92 14.5,19.2 12,19.2M12,5A3,3 0 0,1 15,8A3,3 0 0,1 12,11A3,3 0 0,1 9,8A3,3 0 0,1 12,5M12,2A10,10 0 0,0 2,12A10,10 0 0,0 12,22A10,10 0 0,0 22,12C22,6.47 17.5,2 12,2Z"/></svg>
<div class="t" style="left:1022.60px;top:507px;font-size:13.8px;color:#6c6d70;letter-spacing:0.163px;">Unknown user</div>
<div class="t" style="left:1116.70px;top:507px;font-size:12.4px;color:#8b8b8c;letter-spacing:0.119px;">on Jan 28, 2026 8:25 AM</div>
</div>
</div>
<div id="frame">
<div class="b" style="left:0;top:0;width:1280px;height:1.1px;background:#6e6e6e"></div>
<div class="b" style="left:0;top:1.1px;width:1280px;height:1px;background:#a4a4a4"></div>
<div class="b" style="left:1.2px;top:0;width:1.8px;height:720px;background:rgba(0,0,0,.06)"></div>
<svg style="left:0;top:0" width="1280" height="720" viewBox="0 0 1280 720"><path d="M0 0H1.2V720H0Z" fill="#ececec"/><path d="M0 720V698L0.6 702A18.4 18.4 0 0 0 13 719.4L14 720Z" fill="#0e4835"/><path d="M0 703Q0.5 714 7 720H0Z" fill="#08130f"/><path d="M0.6 694V702A18.4 18.4 0 0 0 13 719.4L14.2 720" fill="none" stroke="#ededed" stroke-width="1.4"/><path d="M1280 713.6L1272.6 720H1280Z" fill="#0b1a2a"/><path d="M1280 715.4L1274.8 720H1280Z" fill="#0b63a5"/><path d="M1280.4 713.2L1272.2 720.3" stroke="#e4e4e4" stroke-width="1.2" fill="none"/></svg>
</div>
<div id="modal">
<svg style="left:0;top:0" width="1280" height="720" viewBox="0 0 1280 720"><rect x="385.5" y="167.9" width="514.5" height="387.6" rx="7" fill="#fff"/></svg>
<div class="t" style="left:412.80px;top:206px;font-size:15.6px;color:#374151;letter-spacing:-0.019px;">Create New Issue</div>
<div class="b" style="left:748.10px;top:195.00px;width:124.70px;height:26.90px;background:#f9fafb;border-radius:6.0px;border:1px solid #e5e7eb;"></div>
<div class="t" style="left:759.40px;top:204px;font-size:11.9px;color:#3a3c41;letter-spacing:0.329px;-webkit-text-stroke:.25px #3a3c41;">Link existing issue</div>
<div class="b" style="left:412.10px;top:242.00px;width:460.70px;height:27.00px;background:#fff;border-radius:6.0px;border:1px solid #e2e4e8;"></div>
<div class="t" style="left:423.40px;top:249px;font-size:12.0px;color:#25282e;letter-spacing:0.361px;">Confluence: confluence</div>
<svg style="left:853px;top:250.9px" width="8.2" height="8.2" viewBox="0 0 8.2 8.2"><path d="M0.3 0.3L7.9 7.9M7.9 0.3L0.3 7.9" stroke="#333" stroke-width="1.15" fill="none"/></svg>
<div class="t" style="left:413.20px;top:288px;font-size:11.9px;color:#6b7280;letter-spacing:0.540px;-webkit-text-stroke:.42px #6b7280;">Title</div>
<div class="b" style="left:412.10px;top:305.40px;width:460.70px;height:27.00px;background:#e8f0fe;border-radius:6.0px;border:1px solid #dbe2ee;"></div>
<div class="t" style="left:427.00px;top:313px;font-size:12.0px;color:#0a0a0a;letter-spacing:0.327px;">Account Management</div>
<div class="t" style="left:413.20px;top:351px;font-size:12.0px;color:#6b7280;letter-spacing:0.405px;-webkit-text-stroke:.42px #6b7280;">Description (optional)</div>
<div class="b" style="left:412.10px;top:369.00px;width:460.70px;height:115.60px;background:#fff;border-radius:6.0px;border:1px solid #e2e4e8;"></div>
<div class="t" style="left:426.80px;top:379px;font-size:12.0px;color:#737985;letter-spacing:0.328px;">Description</div>
<div class="b" style="left:700.20px;top:498.20px;width:98.90px;height:30.40px;background:#6366f1;border-radius:6.5px;"></div>
<div class="t" style="left:714.60px;top:507px;font-size:12.0px;color:#fff;letter-spacing:0.197px;-webkit-text-stroke:.3px #fff;">Create Issue</div>
<div class="b" style="left:805.30px;top:498.20px;width:67.40px;height:30.40px;background:#f9fafb;border-radius:6.5px;border:1px solid #e5e7eb;"></div>
<div class="t" style="left:819.90px;top:507px;font-size:12.0px;color:#3a3c41;letter-spacing:0.249px;-webkit-text-stroke:.25px #3a3c41;">Cancel</div>
<div class="badge" style="left:861.20px;top:255.10px"><span style="font-size:16.4px;top:2.90px;transform:scaleX(1.03)">6</span></div>
<div class="badge" style="left:860.60px;top:317.60px"><span style="font-size:16.4px;top:2.90px;transform:scaleX(1.03)">7</span></div>
<div class="badge" style="left:859.20px;top:469.30px"><span style="font-size:16.4px;top:2.90px;transform:scaleX(1.03)">8</span></div>
<div class="badge" style="left:784.90px;top:512.80px"><span style="font-size:16.4px;top:2.90px;transform:scaleX(1.03)">9</span></div>
</div>
</body>
</html>
